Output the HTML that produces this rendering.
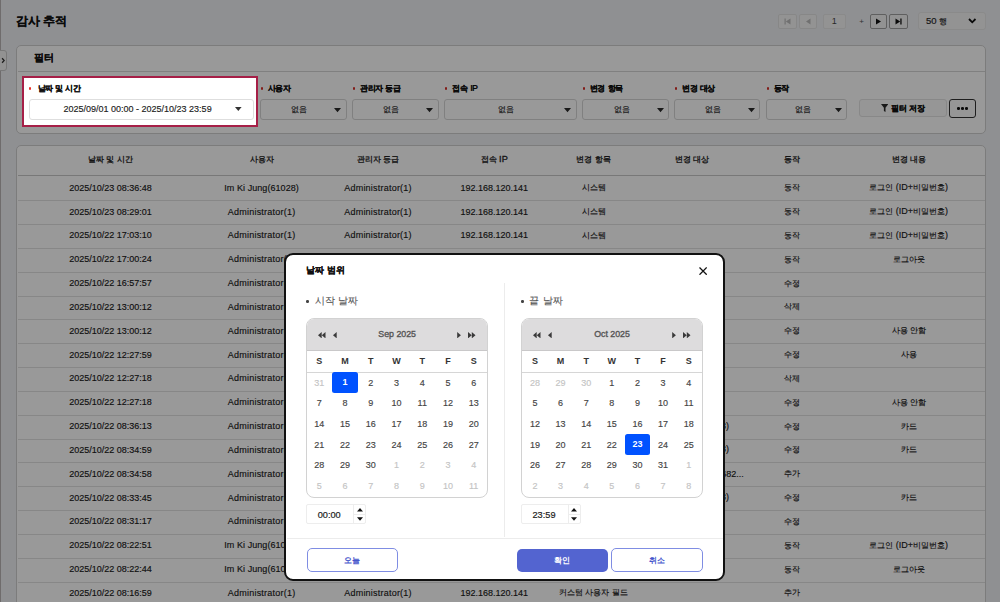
<!DOCTYPE html><html><head><meta charset="utf-8"><style>
*{box-sizing:border-box;margin:0;padding:0}
html,body{width:1000px;height:602px;overflow:hidden}
body{position:relative;background:#eef0f4;font-family:"Liberation Sans", sans-serif;color:#222}
.a{position:absolute}
.t{position:absolute;display:flex;align-items:center;white-space:nowrap;overflow:visible}
.k{font-size:0.86em}
.bd .k{-webkit-text-stroke:0.18px currentColor}
.sb{-webkit-text-stroke:0.25px currentColor}
</style></head><body>
<div class="a" style="left:0;top:0;width:1.2px;height:602px;background:#b9b5b5"></div>
<div class="a" style="left:-4px;top:50.2px;width:10.6px;height:20.6px;background:#f4f4f4;border:1px solid #c8c8c8;border-radius:3px"></div>
<svg class="a" style="left:0px;top:57px" width="5" height="7" viewBox="0 0 5 7"><path d="M2.1 1.3 L4.2 3.5 L2.1 5.7" fill="none" stroke="#333" stroke-width="1.3"/></svg>
<div class="t bd" style="left:16px;top:12px;width:120px;height:18px;justify-content:flex-start;font-size:13.5px;font-weight:bold;color:#111"><span><span class="k">감사 추적</span></span></div>
<div class="a" style="left:778px;top:13.5px;width:19px;height:15.5px;border:1px solid #e2e2e2;background:#f6f6f6;border-radius:2px"></div>
<svg class="a" style="left:784px;top:17.5px" width="7" height="7" viewBox="0 0 7 7"><rect x="0.5" y="0.5" width="1.2" height="6" fill="#bbb"/><path d="M6.5 0.5 L1.8 3.5 L6.5 6.5Z" fill="#bbb"/></svg>
<div class="a" style="left:799px;top:13.5px;width:17.5px;height:15.5px;border:1px solid #e2e2e2;background:#f6f6f6;border-radius:2px"></div>
<svg class="a" style="left:805px;top:17.5px" width="7" height="7" viewBox="0 0 7 7"><path d="M5.5 0.5 L1 3.5 L5.5 6.5Z" fill="#bbb"/></svg>
<div class="a" style="left:823px;top:13.5px;width:22.5px;height:15.5px;border:1px solid #e6e6e6;background:#f6f6f6;border-radius:2px"></div>
<div class="t" style="left:734.3px;top:11.3px;width:200px;height:20px;justify-content:center;font-size:9px;color:#444"><span>1</span></div>
<div class="t" style="left:761.5px;top:11.3px;width:200px;height:20px;justify-content:center;font-size:8px;color:#555"><span>+</span></div>
<div class="a" style="left:869.5px;top:13.5px;width:17px;height:15.5px;border:1px solid #9f9f9f;background:#f4f4f4;border-radius:2px"></div>
<svg class="a" style="left:875px;top:17.5px" width="7" height="7" viewBox="0 0 7 7"><path d="M1 0.5 L6 3.5 L1 6.5Z" fill="#111"/></svg>
<div class="a" style="left:889px;top:13.5px;width:19px;height:15.5px;border:1px solid #9f9f9f;background:#f4f4f4;border-radius:2px"></div>
<svg class="a" style="left:895px;top:17.5px" width="7" height="7" viewBox="0 0 7 7"><path d="M0.5 0.5 L5.2 3.5 L0.5 6.5Z" fill="#111"/><rect x="5.3" y="0.5" width="1.3" height="6" fill="#111"/></svg>
<div class="a" style="left:918px;top:12px;width:67.5px;height:18px;border:1px solid #e6e6e6;background:#f6f6f6;border-radius:3px"></div>
<div class="t" style="left:926px;top:12px;width:40px;height:18px;justify-content:flex-start;font-size:9.5px;color:#2a2a2a;-webkit-text-stroke:0.2px #2a2a2a"><span>50 <span class="k">행</span></span></div>
<svg class="a" style="left:968px;top:18.3px" width="8.5" height="5.5" viewBox="0 0 8.5 5.5"><path d="M1 1 L4.25 4.3 L7.5 1" fill="none" stroke="#111" stroke-width="1.8"/></svg>
<div class="a" style="left:16px;top:45px;width:970px;height:88.8px;border:1px solid #cfcfcf;background:#fff;border-radius:5px"></div>
<div class="a" style="left:17.5px;top:70.5px;width:967.5px;height:1px;background:#d6d6d6"></div>
<div class="t bd" style="left:34px;top:50px;width:40px;height:16px;justify-content:flex-start;font-size:11.3px;font-weight:bold;color:#111"><span><span class="k">필터</span></span></div>
<div class="a" style="left:260.8px;top:87.4px;width:2.2px;height:2.2px;border-radius:50%;background:#d9302a"></div>
<div class="t bd" style="left:268px;top:80px;width:120px;height:16px;justify-content:flex-start;font-size:9px;font-weight:bold;color:#111;letter-spacing:-0.6px;word-spacing:1.2px"><span><span class="k">사용자</span></span></div>
<div class="a" style="left:260px;top:98.8px;width:86.5px;height:21px;border:1.2px solid #d6d6d6;background:#fff;border-radius:3px"></div>
<div class="t" style="left:199.25px;top:99.4px;width:200px;height:20px;justify-content:center;font-size:9.6px;color:#333;-webkit-text-stroke:0.2px #333"><span><span class="k">없음</span></span></div>
<svg class="a" style="left:334.0px;top:107.8px" width="7" height="5" viewBox="0 0 7 5"><path d="M0 0 L7 0 L3.5 4.3Z" fill="#2a2a2a"/></svg>
<div class="a" style="left:353.1px;top:87.4px;width:2.2px;height:2.2px;border-radius:50%;background:#d9302a"></div>
<div class="t bd" style="left:360.3px;top:80px;width:120px;height:16px;justify-content:flex-start;font-size:9px;font-weight:bold;color:#111;letter-spacing:-0.6px;word-spacing:1.2px"><span><span class="k">관리자 등급</span></span></div>
<div class="a" style="left:352.3px;top:98.8px;width:86.3px;height:21px;border:1.2px solid #d6d6d6;background:#fff;border-radius:3px"></div>
<div class="t" style="left:291.45px;top:99.4px;width:200px;height:20px;justify-content:center;font-size:9.6px;color:#333;-webkit-text-stroke:0.2px #333"><span><span class="k">없음</span></span></div>
<svg class="a" style="left:426.1px;top:107.8px" width="7" height="5" viewBox="0 0 7 5"><path d="M0 0 L7 0 L3.5 4.3Z" fill="#2a2a2a"/></svg>
<div class="a" style="left:445.1px;top:87.4px;width:2.2px;height:2.2px;border-radius:50%;background:#d9302a"></div>
<div class="t bd" style="left:452.3px;top:80px;width:120px;height:16px;justify-content:flex-start;font-size:9px;font-weight:bold;color:#111;letter-spacing:-0.6px;word-spacing:1.2px"><span><span class="k">접속</span> IP</span></div>
<div class="a" style="left:444.3px;top:98.8px;width:132.3px;height:21px;border:1.2px solid #d6d6d6;background:#fff;border-radius:3px"></div>
<div class="t" style="left:406.45000000000005px;top:99.4px;width:200px;height:20px;justify-content:center;font-size:9.6px;color:#333;-webkit-text-stroke:0.2px #333"><span><span class="k">없음</span></span></div>
<svg class="a" style="left:564.1px;top:107.8px" width="7" height="5" viewBox="0 0 7 5"><path d="M0 0 L7 0 L3.5 4.3Z" fill="#2a2a2a"/></svg>
<div class="a" style="left:582.8px;top:87.4px;width:2.2px;height:2.2px;border-radius:50%;background:#d9302a"></div>
<div class="t bd" style="left:590px;top:80px;width:120px;height:16px;justify-content:flex-start;font-size:9px;font-weight:bold;color:#111;letter-spacing:-0.6px;word-spacing:1.2px"><span><span class="k">변경 항목</span></span></div>
<div class="a" style="left:582px;top:98.8px;width:87px;height:21px;border:1.2px solid #d6d6d6;background:#fff;border-radius:3px"></div>
<div class="t" style="left:521.5px;top:99.4px;width:200px;height:20px;justify-content:center;font-size:9.6px;color:#333;-webkit-text-stroke:0.2px #333"><span><span class="k">없음</span></span></div>
<svg class="a" style="left:656.5px;top:107.8px" width="7" height="5" viewBox="0 0 7 5"><path d="M0 0 L7 0 L3.5 4.3Z" fill="#2a2a2a"/></svg>
<div class="a" style="left:675.0999999999999px;top:87.4px;width:2.2px;height:2.2px;border-radius:50%;background:#d9302a"></div>
<div class="t bd" style="left:682.3px;top:80px;width:120px;height:16px;justify-content:flex-start;font-size:9px;font-weight:bold;color:#111;letter-spacing:-0.6px;word-spacing:1.2px"><span><span class="k">변경 대상</span></span></div>
<div class="a" style="left:674.3px;top:98.8px;width:86px;height:21px;border:1.2px solid #d6d6d6;background:#fff;border-radius:3px"></div>
<div class="t" style="left:613.3px;top:99.4px;width:200px;height:20px;justify-content:center;font-size:9.6px;color:#333;-webkit-text-stroke:0.2px #333"><span><span class="k">없음</span></span></div>
<svg class="a" style="left:747.8px;top:107.8px" width="7" height="5" viewBox="0 0 7 5"><path d="M0 0 L7 0 L3.5 4.3Z" fill="#2a2a2a"/></svg>
<div class="a" style="left:766.8px;top:87.4px;width:2.2px;height:2.2px;border-radius:50%;background:#d9302a"></div>
<div class="t bd" style="left:774px;top:80px;width:120px;height:16px;justify-content:flex-start;font-size:9px;font-weight:bold;color:#111;letter-spacing:-0.6px;word-spacing:1.2px"><span><span class="k">동작</span></span></div>
<div class="a" style="left:766px;top:98.8px;width:81px;height:21px;border:1.2px solid #d6d6d6;background:#fff;border-radius:3px"></div>
<div class="t" style="left:702.5px;top:99.4px;width:200px;height:20px;justify-content:center;font-size:9.6px;color:#333;-webkit-text-stroke:0.2px #333"><span><span class="k">없음</span></span></div>
<svg class="a" style="left:834.5px;top:107.8px" width="7" height="5" viewBox="0 0 7 5"><path d="M0 0 L7 0 L3.5 4.3Z" fill="#2a2a2a"/></svg>
<div class="a" style="left:858.7px;top:99px;width:88px;height:18.4px;border:1px solid #e3e3e3;background:#fafafa;border-radius:3px"></div>
<svg class="a" style="left:880.6px;top:104.3px" width="7.4" height="8" viewBox="0 0 7.4 8"><path d="M0 0 L7.4 0 L4.5 3.8 L4.5 8 L2.9 7 L2.9 3.8Z" fill="#2a2a2a"/></svg>
<div class="t bd" style="left:891px;top:100px;width:40px;height:16px;justify-content:flex-start;font-size:9.4px;font-weight:bold;color:#111"><span><span class="k">필터 저장</span></span></div>
<div class="a" style="left:949px;top:98.7px;width:27.2px;height:19px;border:1.6px solid #333;background:#fafafa;border-radius:3px"></div>
<div class="a" style="left:957.0px;top:107.3px;width:2.6px;height:2.6px;border-radius:50%;background:#111"></div>
<div class="a" style="left:961.2px;top:107.3px;width:2.6px;height:2.6px;border-radius:50%;background:#111"></div>
<div class="a" style="left:965.4000000000001px;top:107.3px;width:2.6px;height:2.6px;border-radius:50%;background:#111"></div>
<div class="a" style="left:16px;top:145.2px;width:970px;height:470px;border:1px solid #cfcfcf;background:#fff;border-radius:5px"></div>
<div class="a" style="left:17.5px;top:174.5px;width:967.5px;height:1.8px;background:#c9c9c9"></div>
<div class="t" style="left:10.5px;top:149.7px;width:200px;height:20px;justify-content:center;font-size:9.2px;color:#222;-webkit-text-stroke:0.3px #222"><span><span class="k">날짜 및 시간</span></span></div>
<div class="t" style="left:161.60000000000002px;top:149.7px;width:200px;height:20px;justify-content:center;font-size:9.2px;color:#222;-webkit-text-stroke:0.3px #222"><span><span class="k">사용자</span></span></div>
<div class="t" style="left:278.0px;top:149.7px;width:200px;height:20px;justify-content:center;font-size:9.2px;color:#222;-webkit-text-stroke:0.3px #222"><span><span class="k">관리자 등급</span></span></div>
<div class="t" style="left:394.2px;top:149.7px;width:200px;height:20px;justify-content:center;font-size:9.2px;color:#222;-webkit-text-stroke:0.3px #222"><span><span class="k">접속</span> IP</span></div>
<div class="t" style="left:493.5px;top:149.7px;width:200px;height:20px;justify-content:center;font-size:9.2px;color:#222;-webkit-text-stroke:0.3px #222"><span><span class="k">변경 항목</span></span></div>
<div class="t" style="left:592.3px;top:149.7px;width:200px;height:20px;justify-content:center;font-size:9.2px;color:#222;-webkit-text-stroke:0.3px #222"><span><span class="k">변경 대상</span></span></div>
<div class="t" style="left:691.5px;top:149.7px;width:200px;height:20px;justify-content:center;font-size:9.2px;color:#222;-webkit-text-stroke:0.3px #222"><span><span class="k">동작</span></span></div>
<div class="t" style="left:808.7px;top:149.7px;width:200px;height:20px;justify-content:center;font-size:9.2px;color:#222;-webkit-text-stroke:0.3px #222"><span><span class="k">변경 내용</span></span></div>
<div class="a" style="left:17.5px;top:200.30px;width:967.5px;height:1px;background:#e2e2e2"></div>
<div class="t" style="left:10.5px;top:177.8px;width:200px;height:20px;justify-content:center;font-size:9px;color:#1a1a1a;-webkit-text-stroke:0.15px #1a1a1a"><span>2025/10/23 08:36:48</span></div>
<div class="t" style="left:161.60000000000002px;top:177.8px;width:200px;height:20px;justify-content:center;font-size:9px;color:#1a1a1a;-webkit-text-stroke:0.15px #1a1a1a;letter-spacing:0.06px"><span>Im Ki Jung(61028)</span></div>
<div class="t" style="left:278.0px;top:177.8px;width:200px;height:20px;justify-content:center;font-size:9px;color:#1a1a1a;-webkit-text-stroke:0.15px #1a1a1a;letter-spacing:0.22px"><span>Administrator(1)</span></div>
<div class="t" style="left:394.2px;top:177.8px;width:200px;height:20px;justify-content:center;font-size:9px;color:#1a1a1a;-webkit-text-stroke:0.15px #1a1a1a"><span>192.168.120.141</span></div>
<div class="t" style="left:493.5px;top:177.8px;width:200px;height:20px;justify-content:center;font-size:9px;color:#1a1a1a;-webkit-text-stroke:0.15px #1a1a1a"><span><span class="k">시스템</span></span></div>
<div class="t" style="left:691.5px;top:177.8px;width:200px;height:20px;justify-content:center;font-size:9px;color:#1a1a1a;-webkit-text-stroke:0.15px #1a1a1a"><span><span class="k">동작</span></span></div>
<div class="t" style="left:808.7px;top:177.8px;width:200px;height:20px;justify-content:center;font-size:9px;color:#1a1a1a;-webkit-text-stroke:0.15px #1a1a1a"><span><span class="k">로그인</span> (ID+<span class="k">비밀번호</span>)</span></div>
<div class="a" style="left:17.5px;top:224.13px;width:967.5px;height:1px;background:#e2e2e2"></div>
<div class="t" style="left:10.5px;top:201.63px;width:200px;height:20px;justify-content:center;font-size:9px;color:#1a1a1a;-webkit-text-stroke:0.15px #1a1a1a"><span>2025/10/23 08:29:01</span></div>
<div class="t" style="left:161.60000000000002px;top:201.63px;width:200px;height:20px;justify-content:center;font-size:9px;color:#1a1a1a;-webkit-text-stroke:0.15px #1a1a1a;letter-spacing:0.22px"><span>Administrator(1)</span></div>
<div class="t" style="left:278.0px;top:201.63px;width:200px;height:20px;justify-content:center;font-size:9px;color:#1a1a1a;-webkit-text-stroke:0.15px #1a1a1a;letter-spacing:0.22px"><span>Administrator(1)</span></div>
<div class="t" style="left:394.2px;top:201.63px;width:200px;height:20px;justify-content:center;font-size:9px;color:#1a1a1a;-webkit-text-stroke:0.15px #1a1a1a"><span>192.168.120.141</span></div>
<div class="t" style="left:493.5px;top:201.63px;width:200px;height:20px;justify-content:center;font-size:9px;color:#1a1a1a;-webkit-text-stroke:0.15px #1a1a1a"><span><span class="k">시스템</span></span></div>
<div class="t" style="left:691.5px;top:201.63px;width:200px;height:20px;justify-content:center;font-size:9px;color:#1a1a1a;-webkit-text-stroke:0.15px #1a1a1a"><span><span class="k">동작</span></span></div>
<div class="t" style="left:808.7px;top:201.63px;width:200px;height:20px;justify-content:center;font-size:9px;color:#1a1a1a;-webkit-text-stroke:0.15px #1a1a1a"><span><span class="k">로그인</span> (ID+<span class="k">비밀번호</span>)</span></div>
<div class="a" style="left:17.5px;top:247.96px;width:967.5px;height:1px;background:#e2e2e2"></div>
<div class="t" style="left:10.5px;top:225.46px;width:200px;height:20px;justify-content:center;font-size:9px;color:#1a1a1a;-webkit-text-stroke:0.15px #1a1a1a"><span>2025/10/22 17:03:10</span></div>
<div class="t" style="left:161.60000000000002px;top:225.46px;width:200px;height:20px;justify-content:center;font-size:9px;color:#1a1a1a;-webkit-text-stroke:0.15px #1a1a1a;letter-spacing:0.22px"><span>Administrator(1)</span></div>
<div class="t" style="left:278.0px;top:225.46px;width:200px;height:20px;justify-content:center;font-size:9px;color:#1a1a1a;-webkit-text-stroke:0.15px #1a1a1a;letter-spacing:0.22px"><span>Administrator(1)</span></div>
<div class="t" style="left:394.2px;top:225.46px;width:200px;height:20px;justify-content:center;font-size:9px;color:#1a1a1a;-webkit-text-stroke:0.15px #1a1a1a"><span>192.168.120.141</span></div>
<div class="t" style="left:493.5px;top:225.46px;width:200px;height:20px;justify-content:center;font-size:9px;color:#1a1a1a;-webkit-text-stroke:0.15px #1a1a1a"><span><span class="k">시스템</span></span></div>
<div class="t" style="left:691.5px;top:225.46px;width:200px;height:20px;justify-content:center;font-size:9px;color:#1a1a1a;-webkit-text-stroke:0.15px #1a1a1a"><span><span class="k">동작</span></span></div>
<div class="t" style="left:808.7px;top:225.46px;width:200px;height:20px;justify-content:center;font-size:9px;color:#1a1a1a;-webkit-text-stroke:0.15px #1a1a1a"><span><span class="k">로그인</span> (ID+<span class="k">비밀번호</span>)</span></div>
<div class="a" style="left:17.5px;top:271.79px;width:967.5px;height:1px;background:#e2e2e2"></div>
<div class="t" style="left:10.5px;top:249.29000000000002px;width:200px;height:20px;justify-content:center;font-size:9px;color:#1a1a1a;-webkit-text-stroke:0.15px #1a1a1a"><span>2025/10/22 17:00:24</span></div>
<div class="t" style="left:161.60000000000002px;top:249.29000000000002px;width:200px;height:20px;justify-content:center;font-size:9px;color:#1a1a1a;-webkit-text-stroke:0.15px #1a1a1a;letter-spacing:0.22px"><span>Administrator(1)</span></div>
<div class="t" style="left:278.0px;top:249.29000000000002px;width:200px;height:20px;justify-content:center;font-size:9px;color:#1a1a1a;-webkit-text-stroke:0.15px #1a1a1a;letter-spacing:0.22px"><span>Administrator(1)</span></div>
<div class="t" style="left:394.2px;top:249.29000000000002px;width:200px;height:20px;justify-content:center;font-size:9px;color:#1a1a1a;-webkit-text-stroke:0.15px #1a1a1a"><span>192.168.120.141</span></div>
<div class="t" style="left:493.5px;top:249.29000000000002px;width:200px;height:20px;justify-content:center;font-size:9px;color:#1a1a1a;-webkit-text-stroke:0.15px #1a1a1a"><span><span class="k">시스템</span></span></div>
<div class="t" style="left:691.5px;top:249.29000000000002px;width:200px;height:20px;justify-content:center;font-size:9px;color:#1a1a1a;-webkit-text-stroke:0.15px #1a1a1a"><span><span class="k">동작</span></span></div>
<div class="t" style="left:808.7px;top:249.29000000000002px;width:200px;height:20px;justify-content:center;font-size:9px;color:#1a1a1a;-webkit-text-stroke:0.15px #1a1a1a"><span><span class="k">로그아웃</span></span></div>
<div class="a" style="left:17.5px;top:295.62px;width:967.5px;height:1px;background:#e2e2e2"></div>
<div class="t" style="left:10.5px;top:273.12px;width:200px;height:20px;justify-content:center;font-size:9px;color:#1a1a1a;-webkit-text-stroke:0.15px #1a1a1a"><span>2025/10/22 16:57:57</span></div>
<div class="t" style="left:161.60000000000002px;top:273.12px;width:200px;height:20px;justify-content:center;font-size:9px;color:#1a1a1a;-webkit-text-stroke:0.15px #1a1a1a;letter-spacing:0.22px"><span>Administrator(1)</span></div>
<div class="t" style="left:278.0px;top:273.12px;width:200px;height:20px;justify-content:center;font-size:9px;color:#1a1a1a;-webkit-text-stroke:0.15px #1a1a1a;letter-spacing:0.22px"><span>Administrator(1)</span></div>
<div class="t" style="left:394.2px;top:273.12px;width:200px;height:20px;justify-content:center;font-size:9px;color:#1a1a1a;-webkit-text-stroke:0.15px #1a1a1a"><span>192.168.120.141</span></div>
<div class="t" style="left:493.5px;top:273.12px;width:200px;height:20px;justify-content:center;font-size:9px;color:#1a1a1a;-webkit-text-stroke:0.15px #1a1a1a"><span><span class="k">사용자</span></span></div>
<div class="t" style="left:691.5px;top:273.12px;width:200px;height:20px;justify-content:center;font-size:9px;color:#1a1a1a;-webkit-text-stroke:0.15px #1a1a1a"><span><span class="k">수정</span></span></div>
<div class="a" style="left:17.5px;top:319.45px;width:967.5px;height:1px;background:#e2e2e2"></div>
<div class="t" style="left:10.5px;top:296.95px;width:200px;height:20px;justify-content:center;font-size:9px;color:#1a1a1a;-webkit-text-stroke:0.15px #1a1a1a"><span>2025/10/22 13:00:12</span></div>
<div class="t" style="left:161.60000000000002px;top:296.95px;width:200px;height:20px;justify-content:center;font-size:9px;color:#1a1a1a;-webkit-text-stroke:0.15px #1a1a1a;letter-spacing:0.22px"><span>Administrator(1)</span></div>
<div class="t" style="left:278.0px;top:296.95px;width:200px;height:20px;justify-content:center;font-size:9px;color:#1a1a1a;-webkit-text-stroke:0.15px #1a1a1a;letter-spacing:0.22px"><span>Administrator(1)</span></div>
<div class="t" style="left:394.2px;top:296.95px;width:200px;height:20px;justify-content:center;font-size:9px;color:#1a1a1a;-webkit-text-stroke:0.15px #1a1a1a"><span>192.168.120.141</span></div>
<div class="t" style="left:493.5px;top:296.95px;width:200px;height:20px;justify-content:center;font-size:9px;color:#1a1a1a;-webkit-text-stroke:0.15px #1a1a1a"><span><span class="k">사용자</span></span></div>
<div class="t" style="left:691.5px;top:296.95px;width:200px;height:20px;justify-content:center;font-size:9px;color:#1a1a1a;-webkit-text-stroke:0.15px #1a1a1a"><span><span class="k">삭제</span></span></div>
<div class="a" style="left:17.5px;top:343.28px;width:967.5px;height:1px;background:#e2e2e2"></div>
<div class="t" style="left:10.5px;top:320.78px;width:200px;height:20px;justify-content:center;font-size:9px;color:#1a1a1a;-webkit-text-stroke:0.15px #1a1a1a"><span>2025/10/22 13:00:12</span></div>
<div class="t" style="left:161.60000000000002px;top:320.78px;width:200px;height:20px;justify-content:center;font-size:9px;color:#1a1a1a;-webkit-text-stroke:0.15px #1a1a1a;letter-spacing:0.22px"><span>Administrator(1)</span></div>
<div class="t" style="left:278.0px;top:320.78px;width:200px;height:20px;justify-content:center;font-size:9px;color:#1a1a1a;-webkit-text-stroke:0.15px #1a1a1a;letter-spacing:0.22px"><span>Administrator(1)</span></div>
<div class="t" style="left:394.2px;top:320.78px;width:200px;height:20px;justify-content:center;font-size:9px;color:#1a1a1a;-webkit-text-stroke:0.15px #1a1a1a"><span>192.168.120.141</span></div>
<div class="t" style="left:493.5px;top:320.78px;width:200px;height:20px;justify-content:center;font-size:9px;color:#1a1a1a;-webkit-text-stroke:0.15px #1a1a1a"><span><span class="k">사용자</span></span></div>
<div class="t" style="left:691.5px;top:320.78px;width:200px;height:20px;justify-content:center;font-size:9px;color:#1a1a1a;-webkit-text-stroke:0.15px #1a1a1a"><span><span class="k">수정</span></span></div>
<div class="t" style="left:808.7px;top:320.78px;width:200px;height:20px;justify-content:center;font-size:9px;color:#1a1a1a;-webkit-text-stroke:0.15px #1a1a1a"><span><span class="k">사용 안함</span></span></div>
<div class="a" style="left:17.5px;top:367.11px;width:967.5px;height:1px;background:#e2e2e2"></div>
<div class="t" style="left:10.5px;top:344.61px;width:200px;height:20px;justify-content:center;font-size:9px;color:#1a1a1a;-webkit-text-stroke:0.15px #1a1a1a"><span>2025/10/22 12:27:59</span></div>
<div class="t" style="left:161.60000000000002px;top:344.61px;width:200px;height:20px;justify-content:center;font-size:9px;color:#1a1a1a;-webkit-text-stroke:0.15px #1a1a1a;letter-spacing:0.22px"><span>Administrator(1)</span></div>
<div class="t" style="left:278.0px;top:344.61px;width:200px;height:20px;justify-content:center;font-size:9px;color:#1a1a1a;-webkit-text-stroke:0.15px #1a1a1a;letter-spacing:0.22px"><span>Administrator(1)</span></div>
<div class="t" style="left:394.2px;top:344.61px;width:200px;height:20px;justify-content:center;font-size:9px;color:#1a1a1a;-webkit-text-stroke:0.15px #1a1a1a"><span>192.168.120.141</span></div>
<div class="t" style="left:493.5px;top:344.61px;width:200px;height:20px;justify-content:center;font-size:9px;color:#1a1a1a;-webkit-text-stroke:0.15px #1a1a1a"><span><span class="k">사용자</span></span></div>
<div class="t" style="left:691.5px;top:344.61px;width:200px;height:20px;justify-content:center;font-size:9px;color:#1a1a1a;-webkit-text-stroke:0.15px #1a1a1a"><span><span class="k">수정</span></span></div>
<div class="t" style="left:808.7px;top:344.61px;width:200px;height:20px;justify-content:center;font-size:9px;color:#1a1a1a;-webkit-text-stroke:0.15px #1a1a1a"><span><span class="k">사용</span></span></div>
<div class="a" style="left:17.5px;top:390.94px;width:967.5px;height:1px;background:#e2e2e2"></div>
<div class="t" style="left:10.5px;top:368.44px;width:200px;height:20px;justify-content:center;font-size:9px;color:#1a1a1a;-webkit-text-stroke:0.15px #1a1a1a"><span>2025/10/22 12:27:18</span></div>
<div class="t" style="left:161.60000000000002px;top:368.44px;width:200px;height:20px;justify-content:center;font-size:9px;color:#1a1a1a;-webkit-text-stroke:0.15px #1a1a1a;letter-spacing:0.22px"><span>Administrator(1)</span></div>
<div class="t" style="left:278.0px;top:368.44px;width:200px;height:20px;justify-content:center;font-size:9px;color:#1a1a1a;-webkit-text-stroke:0.15px #1a1a1a;letter-spacing:0.22px"><span>Administrator(1)</span></div>
<div class="t" style="left:394.2px;top:368.44px;width:200px;height:20px;justify-content:center;font-size:9px;color:#1a1a1a;-webkit-text-stroke:0.15px #1a1a1a"><span>192.168.120.141</span></div>
<div class="t" style="left:493.5px;top:368.44px;width:200px;height:20px;justify-content:center;font-size:9px;color:#1a1a1a;-webkit-text-stroke:0.15px #1a1a1a"><span><span class="k">사용자</span></span></div>
<div class="t" style="left:691.5px;top:368.44px;width:200px;height:20px;justify-content:center;font-size:9px;color:#1a1a1a;-webkit-text-stroke:0.15px #1a1a1a"><span><span class="k">삭제</span></span></div>
<div class="a" style="left:17.5px;top:414.77px;width:967.5px;height:1px;background:#e2e2e2"></div>
<div class="t" style="left:10.5px;top:392.27px;width:200px;height:20px;justify-content:center;font-size:9px;color:#1a1a1a;-webkit-text-stroke:0.15px #1a1a1a"><span>2025/10/22 12:27:18</span></div>
<div class="t" style="left:161.60000000000002px;top:392.27px;width:200px;height:20px;justify-content:center;font-size:9px;color:#1a1a1a;-webkit-text-stroke:0.15px #1a1a1a;letter-spacing:0.22px"><span>Administrator(1)</span></div>
<div class="t" style="left:278.0px;top:392.27px;width:200px;height:20px;justify-content:center;font-size:9px;color:#1a1a1a;-webkit-text-stroke:0.15px #1a1a1a;letter-spacing:0.22px"><span>Administrator(1)</span></div>
<div class="t" style="left:394.2px;top:392.27px;width:200px;height:20px;justify-content:center;font-size:9px;color:#1a1a1a;-webkit-text-stroke:0.15px #1a1a1a"><span>192.168.120.141</span></div>
<div class="t" style="left:493.5px;top:392.27px;width:200px;height:20px;justify-content:center;font-size:9px;color:#1a1a1a;-webkit-text-stroke:0.15px #1a1a1a"><span><span class="k">사용자</span></span></div>
<div class="t" style="left:691.5px;top:392.27px;width:200px;height:20px;justify-content:center;font-size:9px;color:#1a1a1a;-webkit-text-stroke:0.15px #1a1a1a"><span><span class="k">수정</span></span></div>
<div class="t" style="left:808.7px;top:392.27px;width:200px;height:20px;justify-content:center;font-size:9px;color:#1a1a1a;-webkit-text-stroke:0.15px #1a1a1a"><span><span class="k">사용 안함</span></span></div>
<div class="a" style="left:17.5px;top:438.60px;width:967.5px;height:1px;background:#e2e2e2"></div>
<div class="t" style="left:10.5px;top:416.1px;width:200px;height:20px;justify-content:center;font-size:9px;color:#1a1a1a;-webkit-text-stroke:0.15px #1a1a1a"><span>2025/10/22 08:36:13</span></div>
<div class="t" style="left:161.60000000000002px;top:416.1px;width:200px;height:20px;justify-content:center;font-size:9px;color:#1a1a1a;-webkit-text-stroke:0.15px #1a1a1a;letter-spacing:0.22px"><span>Administrator(1)</span></div>
<div class="t" style="left:278.0px;top:416.1px;width:200px;height:20px;justify-content:center;font-size:9px;color:#1a1a1a;-webkit-text-stroke:0.15px #1a1a1a;letter-spacing:0.22px"><span>Administrator(1)</span></div>
<div class="t" style="left:394.2px;top:416.1px;width:200px;height:20px;justify-content:center;font-size:9px;color:#1a1a1a;-webkit-text-stroke:0.15px #1a1a1a"><span>192.168.120.141</span></div>
<div class="t" style="left:493.5px;top:416.1px;width:200px;height:20px;justify-content:center;font-size:9px;color:#1a1a1a;-webkit-text-stroke:0.15px #1a1a1a"><span><span class="k">카드</span></span></div>
<div class="t" style="left:578.9px;top:416.1px;width:150px;height:20px;justify-content:flex-end;font-size:9px;color:#1a1a1a;-webkit-text-stroke:0.15px #1a1a1a"><span><span class="k">카드 번호</span> (3)</span></div>
<div class="t" style="left:691.5px;top:416.1px;width:200px;height:20px;justify-content:center;font-size:9px;color:#1a1a1a;-webkit-text-stroke:0.15px #1a1a1a"><span><span class="k">수정</span></span></div>
<div class="t" style="left:808.7px;top:416.1px;width:200px;height:20px;justify-content:center;font-size:9px;color:#1a1a1a;-webkit-text-stroke:0.15px #1a1a1a"><span><span class="k">카드</span></span></div>
<div class="a" style="left:17.5px;top:462.43px;width:967.5px;height:1px;background:#e2e2e2"></div>
<div class="t" style="left:10.5px;top:439.93px;width:200px;height:20px;justify-content:center;font-size:9px;color:#1a1a1a;-webkit-text-stroke:0.15px #1a1a1a"><span>2025/10/22 08:34:59</span></div>
<div class="t" style="left:161.60000000000002px;top:439.93px;width:200px;height:20px;justify-content:center;font-size:9px;color:#1a1a1a;-webkit-text-stroke:0.15px #1a1a1a;letter-spacing:0.22px"><span>Administrator(1)</span></div>
<div class="t" style="left:278.0px;top:439.93px;width:200px;height:20px;justify-content:center;font-size:9px;color:#1a1a1a;-webkit-text-stroke:0.15px #1a1a1a;letter-spacing:0.22px"><span>Administrator(1)</span></div>
<div class="t" style="left:394.2px;top:439.93px;width:200px;height:20px;justify-content:center;font-size:9px;color:#1a1a1a;-webkit-text-stroke:0.15px #1a1a1a"><span>192.168.120.141</span></div>
<div class="t" style="left:493.5px;top:439.93px;width:200px;height:20px;justify-content:center;font-size:9px;color:#1a1a1a;-webkit-text-stroke:0.15px #1a1a1a"><span><span class="k">카드</span></span></div>
<div class="t" style="left:578.9px;top:439.93px;width:150px;height:20px;justify-content:flex-end;font-size:9px;color:#1a1a1a;-webkit-text-stroke:0.15px #1a1a1a"><span><span class="k">카드 번호</span> (3)</span></div>
<div class="t" style="left:691.5px;top:439.93px;width:200px;height:20px;justify-content:center;font-size:9px;color:#1a1a1a;-webkit-text-stroke:0.15px #1a1a1a"><span><span class="k">수정</span></span></div>
<div class="t" style="left:808.7px;top:439.93px;width:200px;height:20px;justify-content:center;font-size:9px;color:#1a1a1a;-webkit-text-stroke:0.15px #1a1a1a"><span><span class="k">카드</span></span></div>
<div class="a" style="left:17.5px;top:486.26px;width:967.5px;height:1px;background:#e2e2e2"></div>
<div class="t" style="left:10.5px;top:463.76px;width:200px;height:20px;justify-content:center;font-size:9px;color:#1a1a1a;-webkit-text-stroke:0.15px #1a1a1a"><span>2025/10/22 08:34:58</span></div>
<div class="t" style="left:161.60000000000002px;top:463.76px;width:200px;height:20px;justify-content:center;font-size:9px;color:#1a1a1a;-webkit-text-stroke:0.15px #1a1a1a;letter-spacing:0.22px"><span>Administrator(1)</span></div>
<div class="t" style="left:278.0px;top:463.76px;width:200px;height:20px;justify-content:center;font-size:9px;color:#1a1a1a;-webkit-text-stroke:0.15px #1a1a1a;letter-spacing:0.22px"><span>Administrator(1)</span></div>
<div class="t" style="left:394.2px;top:463.76px;width:200px;height:20px;justify-content:center;font-size:9px;color:#1a1a1a;-webkit-text-stroke:0.15px #1a1a1a"><span>192.168.120.141</span></div>
<div class="t" style="left:493.5px;top:463.76px;width:200px;height:20px;justify-content:center;font-size:9px;color:#1a1a1a;-webkit-text-stroke:0.15px #1a1a1a"><span><span class="k">카드</span></span></div>
<div class="t" style="left:593.8px;top:463.76px;width:150px;height:20px;justify-content:flex-end;font-size:9px;color:#1a1a1a;-webkit-text-stroke:0.15px #1a1a1a"><span>0000-1234-5682...</span></div>
<div class="t" style="left:691.5px;top:463.76px;width:200px;height:20px;justify-content:center;font-size:9px;color:#1a1a1a;-webkit-text-stroke:0.15px #1a1a1a"><span><span class="k">추가</span></span></div>
<div class="a" style="left:17.5px;top:510.09px;width:967.5px;height:1px;background:#e2e2e2"></div>
<div class="t" style="left:10.5px;top:487.59px;width:200px;height:20px;justify-content:center;font-size:9px;color:#1a1a1a;-webkit-text-stroke:0.15px #1a1a1a"><span>2025/10/22 08:33:45</span></div>
<div class="t" style="left:161.60000000000002px;top:487.59px;width:200px;height:20px;justify-content:center;font-size:9px;color:#1a1a1a;-webkit-text-stroke:0.15px #1a1a1a;letter-spacing:0.22px"><span>Administrator(1)</span></div>
<div class="t" style="left:278.0px;top:487.59px;width:200px;height:20px;justify-content:center;font-size:9px;color:#1a1a1a;-webkit-text-stroke:0.15px #1a1a1a;letter-spacing:0.22px"><span>Administrator(1)</span></div>
<div class="t" style="left:394.2px;top:487.59px;width:200px;height:20px;justify-content:center;font-size:9px;color:#1a1a1a;-webkit-text-stroke:0.15px #1a1a1a"><span>192.168.120.141</span></div>
<div class="t" style="left:493.5px;top:487.59px;width:200px;height:20px;justify-content:center;font-size:9px;color:#1a1a1a;-webkit-text-stroke:0.15px #1a1a1a"><span><span class="k">카드</span></span></div>
<div class="t" style="left:578.9px;top:487.59px;width:150px;height:20px;justify-content:flex-end;font-size:9px;color:#1a1a1a;-webkit-text-stroke:0.15px #1a1a1a"><span><span class="k">카드 번호</span> (3)</span></div>
<div class="t" style="left:691.5px;top:487.59px;width:200px;height:20px;justify-content:center;font-size:9px;color:#1a1a1a;-webkit-text-stroke:0.15px #1a1a1a"><span><span class="k">수정</span></span></div>
<div class="t" style="left:808.7px;top:487.59px;width:200px;height:20px;justify-content:center;font-size:9px;color:#1a1a1a;-webkit-text-stroke:0.15px #1a1a1a"><span><span class="k">카드</span></span></div>
<div class="a" style="left:17.5px;top:533.92px;width:967.5px;height:1px;background:#e2e2e2"></div>
<div class="t" style="left:10.5px;top:511.4200000000001px;width:200px;height:20px;justify-content:center;font-size:9px;color:#1a1a1a;-webkit-text-stroke:0.15px #1a1a1a"><span>2025/10/22 08:31:17</span></div>
<div class="t" style="left:161.60000000000002px;top:511.4200000000001px;width:200px;height:20px;justify-content:center;font-size:9px;color:#1a1a1a;-webkit-text-stroke:0.15px #1a1a1a;letter-spacing:0.22px"><span>Administrator(1)</span></div>
<div class="t" style="left:278.0px;top:511.4200000000001px;width:200px;height:20px;justify-content:center;font-size:9px;color:#1a1a1a;-webkit-text-stroke:0.15px #1a1a1a;letter-spacing:0.22px"><span>Administrator(1)</span></div>
<div class="t" style="left:394.2px;top:511.4200000000001px;width:200px;height:20px;justify-content:center;font-size:9px;color:#1a1a1a;-webkit-text-stroke:0.15px #1a1a1a"><span>192.168.120.141</span></div>
<div class="t" style="left:493.5px;top:511.4200000000001px;width:200px;height:20px;justify-content:center;font-size:9px;color:#1a1a1a;-webkit-text-stroke:0.15px #1a1a1a"><span><span class="k">카드</span></span></div>
<div class="t" style="left:691.5px;top:511.4200000000001px;width:200px;height:20px;justify-content:center;font-size:9px;color:#1a1a1a;-webkit-text-stroke:0.15px #1a1a1a"><span><span class="k">수정</span></span></div>
<div class="a" style="left:17.5px;top:557.75px;width:967.5px;height:1px;background:#e2e2e2"></div>
<div class="t" style="left:10.5px;top:535.25px;width:200px;height:20px;justify-content:center;font-size:9px;color:#1a1a1a;-webkit-text-stroke:0.15px #1a1a1a"><span>2025/10/22 08:22:51</span></div>
<div class="t" style="left:161.60000000000002px;top:535.25px;width:200px;height:20px;justify-content:center;font-size:9px;color:#1a1a1a;-webkit-text-stroke:0.15px #1a1a1a;letter-spacing:0.06px"><span>Im Ki Jung(61028)</span></div>
<div class="t" style="left:278.0px;top:535.25px;width:200px;height:20px;justify-content:center;font-size:9px;color:#1a1a1a;-webkit-text-stroke:0.15px #1a1a1a;letter-spacing:0.22px"><span>Administrator(1)</span></div>
<div class="t" style="left:394.2px;top:535.25px;width:200px;height:20px;justify-content:center;font-size:9px;color:#1a1a1a;-webkit-text-stroke:0.15px #1a1a1a"><span>192.168.120.141</span></div>
<div class="t" style="left:493.5px;top:535.25px;width:200px;height:20px;justify-content:center;font-size:9px;color:#1a1a1a;-webkit-text-stroke:0.15px #1a1a1a"><span><span class="k">시스템</span></span></div>
<div class="t" style="left:691.5px;top:535.25px;width:200px;height:20px;justify-content:center;font-size:9px;color:#1a1a1a;-webkit-text-stroke:0.15px #1a1a1a"><span><span class="k">동작</span></span></div>
<div class="t" style="left:808.7px;top:535.25px;width:200px;height:20px;justify-content:center;font-size:9px;color:#1a1a1a;-webkit-text-stroke:0.15px #1a1a1a"><span><span class="k">로그인</span> (ID+<span class="k">비밀번호</span>)</span></div>
<div class="a" style="left:17.5px;top:581.58px;width:967.5px;height:1px;background:#e2e2e2"></div>
<div class="t" style="left:10.5px;top:559.0799999999999px;width:200px;height:20px;justify-content:center;font-size:9px;color:#1a1a1a;-webkit-text-stroke:0.15px #1a1a1a"><span>2025/10/22 08:22:44</span></div>
<div class="t" style="left:161.60000000000002px;top:559.0799999999999px;width:200px;height:20px;justify-content:center;font-size:9px;color:#1a1a1a;-webkit-text-stroke:0.15px #1a1a1a;letter-spacing:0.06px"><span>Im Ki Jung(61028)</span></div>
<div class="t" style="left:278.0px;top:559.0799999999999px;width:200px;height:20px;justify-content:center;font-size:9px;color:#1a1a1a;-webkit-text-stroke:0.15px #1a1a1a;letter-spacing:0.22px"><span>Administrator(1)</span></div>
<div class="t" style="left:394.2px;top:559.0799999999999px;width:200px;height:20px;justify-content:center;font-size:9px;color:#1a1a1a;-webkit-text-stroke:0.15px #1a1a1a"><span>192.168.120.141</span></div>
<div class="t" style="left:493.5px;top:559.0799999999999px;width:200px;height:20px;justify-content:center;font-size:9px;color:#1a1a1a;-webkit-text-stroke:0.15px #1a1a1a"><span><span class="k">시스템</span></span></div>
<div class="t" style="left:691.5px;top:559.0799999999999px;width:200px;height:20px;justify-content:center;font-size:9px;color:#1a1a1a;-webkit-text-stroke:0.15px #1a1a1a"><span><span class="k">동작</span></span></div>
<div class="t" style="left:808.7px;top:559.0799999999999px;width:200px;height:20px;justify-content:center;font-size:9px;color:#1a1a1a;-webkit-text-stroke:0.15px #1a1a1a"><span><span class="k">로그아웃</span></span></div>
<div class="t" style="left:10.5px;top:582.91px;width:200px;height:20px;justify-content:center;font-size:9px;color:#1a1a1a;-webkit-text-stroke:0.15px #1a1a1a"><span>2025/10/22 08:16:59</span></div>
<div class="t" style="left:161.60000000000002px;top:582.91px;width:200px;height:20px;justify-content:center;font-size:9px;color:#1a1a1a;-webkit-text-stroke:0.15px #1a1a1a;letter-spacing:0.22px"><span>Administrator(1)</span></div>
<div class="t" style="left:278.0px;top:582.91px;width:200px;height:20px;justify-content:center;font-size:9px;color:#1a1a1a;-webkit-text-stroke:0.15px #1a1a1a;letter-spacing:0.22px"><span>Administrator(1)</span></div>
<div class="t" style="left:394.2px;top:582.91px;width:200px;height:20px;justify-content:center;font-size:9px;color:#1a1a1a;-webkit-text-stroke:0.15px #1a1a1a"><span>192.168.120.141</span></div>
<div class="t" style="left:493.5px;top:582.91px;width:200px;height:20px;justify-content:center;font-size:9px;color:#1a1a1a;-webkit-text-stroke:0.15px #1a1a1a"><span><span class="k">커스텀 사용자 필드</span></span></div>
<div class="t" style="left:691.5px;top:582.91px;width:200px;height:20px;justify-content:center;font-size:9px;color:#1a1a1a;-webkit-text-stroke:0.15px #1a1a1a"><span><span class="k">추가</span></span></div>
<div class="a" style="left:0;top:0;width:1000px;height:602px;background:rgba(0,0,0,0.4)"></div>
<div class="a" style="left:21.8px;top:76.2px;width:236.2px;height:50.9px;border:2.2px solid #a61f47;background:#fff"></div>
<div class="a" style="left:29.3px;top:87.4px;width:2.2px;height:2.2px;border-radius:50%;background:#e8302a"></div>
<div class="t bd" style="left:37.8px;top:80px;width:120px;height:16px;justify-content:flex-start;font-size:9px;font-weight:bold;color:#111;letter-spacing:-0.6px;word-spacing:1.2px"><span><span class="k">날짜 및 시간</span></span></div>
<div class="a" style="left:29.3px;top:98.5px;width:225px;height:21px;border:1px solid #dedede;background:#fff;border-radius:3px"></div>
<div class="t" style="left:63.5px;top:100px;width:160px;height:18px;justify-content:flex-start;font-size:9px;color:#222;-webkit-text-stroke:0.15px #222"><span>2025/09/01 00:00 - 2025/10/23 23:59</span></div>
<svg class="a" style="left:234.8px;top:107.3px" width="7" height="5" viewBox="0 0 7 5"><path d="M0 0 L6.6 0 L3.3 4Z" fill="#333"/></svg>
<div class="a" style="left:284.3px;top:253px;width:440.9px;height:327.7px;border:2px solid #111;background:#fff;border-radius:9px"></div>
<div class="t bd" style="left:306.4px;top:262px;width:80px;height:16px;justify-content:flex-start;font-size:10.93px;font-weight:bold;color:#111"><span><span class="k">날짜 범위</span></span></div>
<svg class="a" style="left:699px;top:267px" width="8.2" height="8.2" viewBox="0 0 8.2 8.2"><path d="M0.5 0.5 L7.7 7.7 M7.7 0.5 L0.5 7.7" stroke="#111" stroke-width="1.3"/></svg>
<div class="a" style="left:503.6px;top:283.4px;width:1px;height:254px;background:#ececec"></div>
<div class="a" style="left:287px;top:538.2px;width:435.5px;height:1px;background:#ececec"></div>
<div class="a" style="left:306.4px;top:300.2px;width:2.4px;height:2.4px;border-radius:50%;background:#444"></div>
<div class="t" style="left:314.59999999999997px;top:291.5px;width:80px;height:18px;justify-content:flex-start;font-size:12px;color:#555;-webkit-text-stroke:0.1px #555;word-spacing:1px"><span><span class="k">시작 날짜</span></span></div>
<div class="a" style="left:306.4px;top:318.2px;width:181.6px;height:179.7px;border:1.3px solid #d2d2d2;background:#fff;border-radius:8px;overflow:hidden"><div class="a" style="left:0;top:0;width:100%;height:31.7px;background:#dddcdd;border-bottom:1.3px solid #c9c8c9"></div><div class="a" style="left:0;top:52.5px;width:100%;height:1.3px;background:#d6d6d6"></div></div>
<div class="t" style="left:297.2px;top:323.6px;width:200px;height:20px;justify-content:center;font-size:8.8px;color:#555;-webkit-text-stroke:0.35px #555"><span>Sep 2025</span></div>
<svg class="a" style="left:318.0px;top:331.6px" width="8" height="6.4" viewBox="0 0 8 6.4"><path d="M3.7 0 L0 3.2 L3.7 6.4Z M7.5 0 L3.8 3.2 L7.5 6.4Z" fill="#3a3a3a"/></svg>
<svg class="a" style="left:332.7px;top:331.6px" width="4" height="6.4" viewBox="0 0 4 6.4"><path d="M3.7 0 L0 3.2 L3.7 6.4Z" fill="#3a3a3a"/></svg>
<svg class="a" style="left:457.4px;top:331.6px" width="4" height="6.4" viewBox="0 0 4 6.4"><path d="M0.2 0 L3.9 3.2 L0.2 6.4Z" fill="#3a3a3a"/></svg>
<svg class="a" style="left:468.4px;top:331.6px" width="8" height="6.4" viewBox="0 0 8 6.4"><path d="M0 0 L3.7 3.2 L0 6.4Z M3.8 0 L7.5 3.2 L3.8 6.4Z" fill="#3a3a3a"/></svg>
<div class="t bd" style="left:219.29999999999995px;top:350.7px;width:200px;height:20px;justify-content:center;font-size:9px;font-weight:bold;color:#333"><span>S</span></div>
<div class="t bd" style="left:245.02999999999997px;top:350.7px;width:200px;height:20px;justify-content:center;font-size:9px;font-weight:bold;color:#333"><span>M</span></div>
<div class="t bd" style="left:270.75999999999993px;top:350.7px;width:200px;height:20px;justify-content:center;font-size:9px;font-weight:bold;color:#333"><span>T</span></div>
<div class="t bd" style="left:296.48999999999995px;top:350.7px;width:200px;height:20px;justify-content:center;font-size:9px;font-weight:bold;color:#333"><span>W</span></div>
<div class="t bd" style="left:322.21999999999997px;top:350.7px;width:200px;height:20px;justify-content:center;font-size:9px;font-weight:bold;color:#333"><span>T</span></div>
<div class="t bd" style="left:347.94999999999993px;top:350.7px;width:200px;height:20px;justify-content:center;font-size:9px;font-weight:bold;color:#333"><span>F</span></div>
<div class="t bd" style="left:373.67999999999995px;top:350.7px;width:200px;height:20px;justify-content:center;font-size:9px;font-weight:bold;color:#333"><span>S</span></div>
<div class="t" style="left:219.29999999999995px;top:372.6px;width:200px;height:20px;justify-content:center;font-size:9px;color:#c4c4c4;-webkit-text-stroke:0.15px #c4c4c4"><span>31</span></div>
<div class="a" style="left:332.22999999999996px;top:372.3px;width:25.8px;height:20.9px;background:#0052ff;border-radius:2.5px"></div>
<div class="t bd" style="left:245.02999999999997px;top:372.3px;width:200px;height:20px;justify-content:center;font-size:9px;font-weight:bold;color:#fff"><span>1</span></div>
<div class="t" style="left:270.75999999999993px;top:372.6px;width:200px;height:20px;justify-content:center;font-size:9px;color:#444;-webkit-text-stroke:0.15px #444"><span>2</span></div>
<div class="t" style="left:296.48999999999995px;top:372.6px;width:200px;height:20px;justify-content:center;font-size:9px;color:#444;-webkit-text-stroke:0.15px #444"><span>3</span></div>
<div class="t" style="left:322.21999999999997px;top:372.6px;width:200px;height:20px;justify-content:center;font-size:9px;color:#444;-webkit-text-stroke:0.15px #444"><span>4</span></div>
<div class="t" style="left:347.94999999999993px;top:372.6px;width:200px;height:20px;justify-content:center;font-size:9px;color:#444;-webkit-text-stroke:0.15px #444"><span>5</span></div>
<div class="t" style="left:373.67999999999995px;top:372.6px;width:200px;height:20px;justify-content:center;font-size:9px;color:#444;-webkit-text-stroke:0.15px #444"><span>6</span></div>
<div class="t" style="left:219.29999999999995px;top:393.25px;width:200px;height:20px;justify-content:center;font-size:9px;color:#444;-webkit-text-stroke:0.15px #444"><span>7</span></div>
<div class="t" style="left:245.02999999999997px;top:393.25px;width:200px;height:20px;justify-content:center;font-size:9px;color:#444;-webkit-text-stroke:0.15px #444"><span>8</span></div>
<div class="t" style="left:270.75999999999993px;top:393.25px;width:200px;height:20px;justify-content:center;font-size:9px;color:#444;-webkit-text-stroke:0.15px #444"><span>9</span></div>
<div class="t" style="left:296.48999999999995px;top:393.25px;width:200px;height:20px;justify-content:center;font-size:9px;color:#444;-webkit-text-stroke:0.15px #444"><span>10</span></div>
<div class="t" style="left:322.21999999999997px;top:393.25px;width:200px;height:20px;justify-content:center;font-size:9px;color:#444;-webkit-text-stroke:0.15px #444"><span>11</span></div>
<div class="t" style="left:347.94999999999993px;top:393.25px;width:200px;height:20px;justify-content:center;font-size:9px;color:#444;-webkit-text-stroke:0.15px #444"><span>12</span></div>
<div class="t" style="left:373.67999999999995px;top:393.25px;width:200px;height:20px;justify-content:center;font-size:9px;color:#444;-webkit-text-stroke:0.15px #444"><span>13</span></div>
<div class="t" style="left:219.29999999999995px;top:413.90000000000003px;width:200px;height:20px;justify-content:center;font-size:9px;color:#444;-webkit-text-stroke:0.15px #444"><span>14</span></div>
<div class="t" style="left:245.02999999999997px;top:413.90000000000003px;width:200px;height:20px;justify-content:center;font-size:9px;color:#444;-webkit-text-stroke:0.15px #444"><span>15</span></div>
<div class="t" style="left:270.75999999999993px;top:413.90000000000003px;width:200px;height:20px;justify-content:center;font-size:9px;color:#444;-webkit-text-stroke:0.15px #444"><span>16</span></div>
<div class="t" style="left:296.48999999999995px;top:413.90000000000003px;width:200px;height:20px;justify-content:center;font-size:9px;color:#444;-webkit-text-stroke:0.15px #444"><span>17</span></div>
<div class="t" style="left:322.21999999999997px;top:413.90000000000003px;width:200px;height:20px;justify-content:center;font-size:9px;color:#444;-webkit-text-stroke:0.15px #444"><span>18</span></div>
<div class="t" style="left:347.94999999999993px;top:413.90000000000003px;width:200px;height:20px;justify-content:center;font-size:9px;color:#444;-webkit-text-stroke:0.15px #444"><span>19</span></div>
<div class="t" style="left:373.67999999999995px;top:413.90000000000003px;width:200px;height:20px;justify-content:center;font-size:9px;color:#444;-webkit-text-stroke:0.15px #444"><span>20</span></div>
<div class="t" style="left:219.29999999999995px;top:434.55px;width:200px;height:20px;justify-content:center;font-size:9px;color:#444;-webkit-text-stroke:0.15px #444"><span>21</span></div>
<div class="t" style="left:245.02999999999997px;top:434.55px;width:200px;height:20px;justify-content:center;font-size:9px;color:#444;-webkit-text-stroke:0.15px #444"><span>22</span></div>
<div class="t" style="left:270.75999999999993px;top:434.55px;width:200px;height:20px;justify-content:center;font-size:9px;color:#444;-webkit-text-stroke:0.15px #444"><span>23</span></div>
<div class="t" style="left:296.48999999999995px;top:434.55px;width:200px;height:20px;justify-content:center;font-size:9px;color:#444;-webkit-text-stroke:0.15px #444"><span>24</span></div>
<div class="t" style="left:322.21999999999997px;top:434.55px;width:200px;height:20px;justify-content:center;font-size:9px;color:#444;-webkit-text-stroke:0.15px #444"><span>25</span></div>
<div class="t" style="left:347.94999999999993px;top:434.55px;width:200px;height:20px;justify-content:center;font-size:9px;color:#444;-webkit-text-stroke:0.15px #444"><span>26</span></div>
<div class="t" style="left:373.67999999999995px;top:434.55px;width:200px;height:20px;justify-content:center;font-size:9px;color:#444;-webkit-text-stroke:0.15px #444"><span>27</span></div>
<div class="t" style="left:219.29999999999995px;top:455.20000000000005px;width:200px;height:20px;justify-content:center;font-size:9px;color:#444;-webkit-text-stroke:0.15px #444"><span>28</span></div>
<div class="t" style="left:245.02999999999997px;top:455.20000000000005px;width:200px;height:20px;justify-content:center;font-size:9px;color:#444;-webkit-text-stroke:0.15px #444"><span>29</span></div>
<div class="t" style="left:270.75999999999993px;top:455.20000000000005px;width:200px;height:20px;justify-content:center;font-size:9px;color:#444;-webkit-text-stroke:0.15px #444"><span>30</span></div>
<div class="t" style="left:296.48999999999995px;top:455.20000000000005px;width:200px;height:20px;justify-content:center;font-size:9px;color:#c4c4c4;-webkit-text-stroke:0.15px #c4c4c4"><span>1</span></div>
<div class="t" style="left:322.21999999999997px;top:455.20000000000005px;width:200px;height:20px;justify-content:center;font-size:9px;color:#c4c4c4;-webkit-text-stroke:0.15px #c4c4c4"><span>2</span></div>
<div class="t" style="left:347.94999999999993px;top:455.20000000000005px;width:200px;height:20px;justify-content:center;font-size:9px;color:#c4c4c4;-webkit-text-stroke:0.15px #c4c4c4"><span>3</span></div>
<div class="t" style="left:373.67999999999995px;top:455.20000000000005px;width:200px;height:20px;justify-content:center;font-size:9px;color:#c4c4c4;-webkit-text-stroke:0.15px #c4c4c4"><span>4</span></div>
<div class="t" style="left:219.29999999999995px;top:475.85px;width:200px;height:20px;justify-content:center;font-size:9px;color:#c4c4c4;-webkit-text-stroke:0.15px #c4c4c4"><span>5</span></div>
<div class="t" style="left:245.02999999999997px;top:475.85px;width:200px;height:20px;justify-content:center;font-size:9px;color:#c4c4c4;-webkit-text-stroke:0.15px #c4c4c4"><span>6</span></div>
<div class="t" style="left:270.75999999999993px;top:475.85px;width:200px;height:20px;justify-content:center;font-size:9px;color:#c4c4c4;-webkit-text-stroke:0.15px #c4c4c4"><span>7</span></div>
<div class="t" style="left:296.48999999999995px;top:475.85px;width:200px;height:20px;justify-content:center;font-size:9px;color:#c4c4c4;-webkit-text-stroke:0.15px #c4c4c4"><span>8</span></div>
<div class="t" style="left:322.21999999999997px;top:475.85px;width:200px;height:20px;justify-content:center;font-size:9px;color:#c4c4c4;-webkit-text-stroke:0.15px #c4c4c4"><span>9</span></div>
<div class="t" style="left:347.94999999999993px;top:475.85px;width:200px;height:20px;justify-content:center;font-size:9px;color:#c4c4c4;-webkit-text-stroke:0.15px #c4c4c4"><span>10</span></div>
<div class="t" style="left:373.67999999999995px;top:475.85px;width:200px;height:20px;justify-content:center;font-size:9px;color:#c4c4c4;-webkit-text-stroke:0.15px #c4c4c4"><span>11</span></div>
<div class="a" style="left:306.4px;top:504.3px;width:59.5px;height:20.2px;border:1px solid #ededed;background:#fff;border-radius:2px"></div>
<div class="a" style="left:353.2px;top:504.3px;width:1px;height:20.2px;background:#ededed"></div>
<div class="a" style="left:353.2px;top:514.2px;width:12.7px;height:1px;background:#ededed"></div>
<div class="t" style="left:317.7px;top:505px;width:40px;height:19px;justify-content:flex-start;font-size:9.2px;color:#222;-webkit-text-stroke:0.2px #222"><span>00:00</span></div>
<svg class="a" style="left:356.59999999999997px;top:507.8px" width="6" height="4" viewBox="0 0 6 4"><path d="M0 3.6 L6 3.6 L3 0Z" fill="#111"/></svg>
<svg class="a" style="left:356.59999999999997px;top:517.3px" width="6" height="4" viewBox="0 0 6 4"><path d="M0 0.2 L6 0.2 L3 3.8Z" fill="#111"/></svg>
<div class="a" style="left:521.2px;top:300.2px;width:2.4px;height:2.4px;border-radius:50%;background:#444"></div>
<div class="t" style="left:529.4000000000001px;top:291.5px;width:80px;height:18px;justify-content:flex-start;font-size:12px;color:#555;-webkit-text-stroke:0.1px #555;word-spacing:1px"><span><span class="k">끝 날짜</span></span></div>
<div class="a" style="left:521.2px;top:318.2px;width:181.6px;height:179.7px;border:1.3px solid #d2d2d2;background:#fff;border-radius:8px;overflow:hidden"><div class="a" style="left:0;top:0;width:100%;height:31.7px;background:#dddcdd;border-bottom:1.3px solid #c9c8c9"></div><div class="a" style="left:0;top:52.5px;width:100%;height:1.3px;background:#d6d6d6"></div></div>
<div class="t" style="left:512.0px;top:323.6px;width:200px;height:20px;justify-content:center;font-size:8.8px;color:#555;-webkit-text-stroke:0.35px #555"><span>Oct 2025</span></div>
<svg class="a" style="left:532.8000000000001px;top:331.6px" width="8" height="6.4" viewBox="0 0 8 6.4"><path d="M3.7 0 L0 3.2 L3.7 6.4Z M7.5 0 L3.8 3.2 L7.5 6.4Z" fill="#3a3a3a"/></svg>
<svg class="a" style="left:547.5px;top:331.6px" width="4" height="6.4" viewBox="0 0 4 6.4"><path d="M3.7 0 L0 3.2 L3.7 6.4Z" fill="#3a3a3a"/></svg>
<svg class="a" style="left:672.2px;top:331.6px" width="4" height="6.4" viewBox="0 0 4 6.4"><path d="M0.2 0 L3.9 3.2 L0.2 6.4Z" fill="#3a3a3a"/></svg>
<svg class="a" style="left:683.2px;top:331.6px" width="8" height="6.4" viewBox="0 0 8 6.4"><path d="M0 0 L3.7 3.2 L0 6.4Z M3.8 0 L7.5 3.2 L3.8 6.4Z" fill="#3a3a3a"/></svg>
<div class="t bd" style="left:435.0px;top:350.7px;width:200px;height:20px;justify-content:center;font-size:9px;font-weight:bold;color:#333"><span>S</span></div>
<div class="t bd" style="left:460.62px;top:350.7px;width:200px;height:20px;justify-content:center;font-size:9px;font-weight:bold;color:#333"><span>M</span></div>
<div class="t bd" style="left:486.24px;top:350.7px;width:200px;height:20px;justify-content:center;font-size:9px;font-weight:bold;color:#333"><span>T</span></div>
<div class="t bd" style="left:511.86px;top:350.7px;width:200px;height:20px;justify-content:center;font-size:9px;font-weight:bold;color:#333"><span>W</span></div>
<div class="t bd" style="left:537.48px;top:350.7px;width:200px;height:20px;justify-content:center;font-size:9px;font-weight:bold;color:#333"><span>T</span></div>
<div class="t bd" style="left:563.1px;top:350.7px;width:200px;height:20px;justify-content:center;font-size:9px;font-weight:bold;color:#333"><span>F</span></div>
<div class="t bd" style="left:588.72px;top:350.7px;width:200px;height:20px;justify-content:center;font-size:9px;font-weight:bold;color:#333"><span>S</span></div>
<div class="t" style="left:435.0px;top:372.6px;width:200px;height:20px;justify-content:center;font-size:9px;color:#c4c4c4;-webkit-text-stroke:0.15px #c4c4c4"><span>28</span></div>
<div class="t" style="left:460.62px;top:372.6px;width:200px;height:20px;justify-content:center;font-size:9px;color:#c4c4c4;-webkit-text-stroke:0.15px #c4c4c4"><span>29</span></div>
<div class="t" style="left:486.24px;top:372.6px;width:200px;height:20px;justify-content:center;font-size:9px;color:#c4c4c4;-webkit-text-stroke:0.15px #c4c4c4"><span>30</span></div>
<div class="t" style="left:511.86px;top:372.6px;width:200px;height:20px;justify-content:center;font-size:9px;color:#444;-webkit-text-stroke:0.15px #444"><span>1</span></div>
<div class="t" style="left:537.48px;top:372.6px;width:200px;height:20px;justify-content:center;font-size:9px;color:#444;-webkit-text-stroke:0.15px #444"><span>2</span></div>
<div class="t" style="left:563.1px;top:372.6px;width:200px;height:20px;justify-content:center;font-size:9px;color:#444;-webkit-text-stroke:0.15px #444"><span>3</span></div>
<div class="t" style="left:588.72px;top:372.6px;width:200px;height:20px;justify-content:center;font-size:9px;color:#444;-webkit-text-stroke:0.15px #444"><span>4</span></div>
<div class="t" style="left:435.0px;top:393.25px;width:200px;height:20px;justify-content:center;font-size:9px;color:#444;-webkit-text-stroke:0.15px #444"><span>5</span></div>
<div class="t" style="left:460.62px;top:393.25px;width:200px;height:20px;justify-content:center;font-size:9px;color:#444;-webkit-text-stroke:0.15px #444"><span>6</span></div>
<div class="t" style="left:486.24px;top:393.25px;width:200px;height:20px;justify-content:center;font-size:9px;color:#444;-webkit-text-stroke:0.15px #444"><span>7</span></div>
<div class="t" style="left:511.86px;top:393.25px;width:200px;height:20px;justify-content:center;font-size:9px;color:#444;-webkit-text-stroke:0.15px #444"><span>8</span></div>
<div class="t" style="left:537.48px;top:393.25px;width:200px;height:20px;justify-content:center;font-size:9px;color:#444;-webkit-text-stroke:0.15px #444"><span>9</span></div>
<div class="t" style="left:563.1px;top:393.25px;width:200px;height:20px;justify-content:center;font-size:9px;color:#444;-webkit-text-stroke:0.15px #444"><span>10</span></div>
<div class="t" style="left:588.72px;top:393.25px;width:200px;height:20px;justify-content:center;font-size:9px;color:#444;-webkit-text-stroke:0.15px #444"><span>11</span></div>
<div class="t" style="left:435.0px;top:413.90000000000003px;width:200px;height:20px;justify-content:center;font-size:9px;color:#444;-webkit-text-stroke:0.15px #444"><span>12</span></div>
<div class="t" style="left:460.62px;top:413.90000000000003px;width:200px;height:20px;justify-content:center;font-size:9px;color:#444;-webkit-text-stroke:0.15px #444"><span>13</span></div>
<div class="t" style="left:486.24px;top:413.90000000000003px;width:200px;height:20px;justify-content:center;font-size:9px;color:#444;-webkit-text-stroke:0.15px #444"><span>14</span></div>
<div class="t" style="left:511.86px;top:413.90000000000003px;width:200px;height:20px;justify-content:center;font-size:9px;color:#444;-webkit-text-stroke:0.15px #444"><span>15</span></div>
<div class="t" style="left:537.48px;top:413.90000000000003px;width:200px;height:20px;justify-content:center;font-size:9px;color:#444;-webkit-text-stroke:0.15px #444"><span>16</span></div>
<div class="t" style="left:563.1px;top:413.90000000000003px;width:200px;height:20px;justify-content:center;font-size:9px;color:#444;-webkit-text-stroke:0.15px #444"><span>17</span></div>
<div class="t" style="left:588.72px;top:413.90000000000003px;width:200px;height:20px;justify-content:center;font-size:9px;color:#444;-webkit-text-stroke:0.15px #444"><span>18</span></div>
<div class="t" style="left:435.0px;top:434.55px;width:200px;height:20px;justify-content:center;font-size:9px;color:#444;-webkit-text-stroke:0.15px #444"><span>19</span></div>
<div class="t" style="left:460.62px;top:434.55px;width:200px;height:20px;justify-content:center;font-size:9px;color:#444;-webkit-text-stroke:0.15px #444"><span>20</span></div>
<div class="t" style="left:486.24px;top:434.55px;width:200px;height:20px;justify-content:center;font-size:9px;color:#444;-webkit-text-stroke:0.15px #444"><span>21</span></div>
<div class="t" style="left:511.86px;top:434.55px;width:200px;height:20px;justify-content:center;font-size:9px;color:#444;-webkit-text-stroke:0.15px #444"><span>22</span></div>
<div class="a" style="left:624.6800000000001px;top:434.25px;width:25.8px;height:20.9px;background:#0052ff;border-radius:2.5px"></div>
<div class="t bd" style="left:537.48px;top:434.25px;width:200px;height:20px;justify-content:center;font-size:9px;font-weight:bold;color:#fff"><span>23</span></div>
<div class="t" style="left:563.1px;top:434.55px;width:200px;height:20px;justify-content:center;font-size:9px;color:#444;-webkit-text-stroke:0.15px #444"><span>24</span></div>
<div class="t" style="left:588.72px;top:434.55px;width:200px;height:20px;justify-content:center;font-size:9px;color:#444;-webkit-text-stroke:0.15px #444"><span>25</span></div>
<div class="t" style="left:435.0px;top:455.20000000000005px;width:200px;height:20px;justify-content:center;font-size:9px;color:#444;-webkit-text-stroke:0.15px #444"><span>26</span></div>
<div class="t" style="left:460.62px;top:455.20000000000005px;width:200px;height:20px;justify-content:center;font-size:9px;color:#444;-webkit-text-stroke:0.15px #444"><span>27</span></div>
<div class="t" style="left:486.24px;top:455.20000000000005px;width:200px;height:20px;justify-content:center;font-size:9px;color:#444;-webkit-text-stroke:0.15px #444"><span>28</span></div>
<div class="t" style="left:511.86px;top:455.20000000000005px;width:200px;height:20px;justify-content:center;font-size:9px;color:#444;-webkit-text-stroke:0.15px #444"><span>29</span></div>
<div class="t" style="left:537.48px;top:455.20000000000005px;width:200px;height:20px;justify-content:center;font-size:9px;color:#444;-webkit-text-stroke:0.15px #444"><span>30</span></div>
<div class="t" style="left:563.1px;top:455.20000000000005px;width:200px;height:20px;justify-content:center;font-size:9px;color:#444;-webkit-text-stroke:0.15px #444"><span>31</span></div>
<div class="t" style="left:588.72px;top:455.20000000000005px;width:200px;height:20px;justify-content:center;font-size:9px;color:#c4c4c4;-webkit-text-stroke:0.15px #c4c4c4"><span>1</span></div>
<div class="t" style="left:435.0px;top:475.85px;width:200px;height:20px;justify-content:center;font-size:9px;color:#c4c4c4;-webkit-text-stroke:0.15px #c4c4c4"><span>2</span></div>
<div class="t" style="left:460.62px;top:475.85px;width:200px;height:20px;justify-content:center;font-size:9px;color:#c4c4c4;-webkit-text-stroke:0.15px #c4c4c4"><span>3</span></div>
<div class="t" style="left:486.24px;top:475.85px;width:200px;height:20px;justify-content:center;font-size:9px;color:#c4c4c4;-webkit-text-stroke:0.15px #c4c4c4"><span>4</span></div>
<div class="t" style="left:511.86px;top:475.85px;width:200px;height:20px;justify-content:center;font-size:9px;color:#c4c4c4;-webkit-text-stroke:0.15px #c4c4c4"><span>5</span></div>
<div class="t" style="left:537.48px;top:475.85px;width:200px;height:20px;justify-content:center;font-size:9px;color:#c4c4c4;-webkit-text-stroke:0.15px #c4c4c4"><span>6</span></div>
<div class="t" style="left:563.1px;top:475.85px;width:200px;height:20px;justify-content:center;font-size:9px;color:#c4c4c4;-webkit-text-stroke:0.15px #c4c4c4"><span>7</span></div>
<div class="t" style="left:588.72px;top:475.85px;width:200px;height:20px;justify-content:center;font-size:9px;color:#c4c4c4;-webkit-text-stroke:0.15px #c4c4c4"><span>8</span></div>
<div class="a" style="left:521.2px;top:504.3px;width:59.5px;height:20.2px;border:1px solid #ededed;background:#fff;border-radius:2px"></div>
<div class="a" style="left:568.0px;top:504.3px;width:1px;height:20.2px;background:#ededed"></div>
<div class="a" style="left:568.0px;top:514.2px;width:12.7px;height:1px;background:#ededed"></div>
<div class="t" style="left:532.5px;top:505px;width:40px;height:19px;justify-content:flex-start;font-size:9.2px;color:#222;-webkit-text-stroke:0.2px #222"><span>23:59</span></div>
<svg class="a" style="left:571.4000000000001px;top:507.8px" width="6" height="4" viewBox="0 0 6 4"><path d="M0 3.6 L6 3.6 L3 0Z" fill="#111"/></svg>
<svg class="a" style="left:571.4000000000001px;top:517.3px" width="6" height="4" viewBox="0 0 6 4"><path d="M0 0.2 L6 0.2 L3 3.8Z" fill="#111"/></svg>
<div class="a" style="left:307px;top:548.3px;width:91.3px;height:23.5px;border:1.2px solid #7f8de3;background:#fff;border-radius:5px"></div>
<div class="t" style="left:252.2px;top:550.2px;width:200px;height:20px;justify-content:center;font-size:9px;font-weight:600;color:#4656cc"><span><span class="k">오늘</span></span></div>
<div class="a" style="left:516.8px;top:548.5px;width:91px;height:23.4px;background:#5364d0;border-radius:5px"></div>
<div class="t" style="left:462.29999999999995px;top:550.2px;width:200px;height:20px;justify-content:center;font-size:9px;font-weight:600;color:#fff"><span><span class="k">확인</span></span></div>
<div class="a" style="left:611.2px;top:548.3px;width:91.7px;height:23.5px;border:1.2px solid #7f8de3;background:#fff;border-radius:5px"></div>
<div class="t" style="left:556.8px;top:550.2px;width:200px;height:20px;justify-content:center;font-size:9px;font-weight:600;color:#4656cc"><span><span class="k">취소</span></span></div>
</body></html>
